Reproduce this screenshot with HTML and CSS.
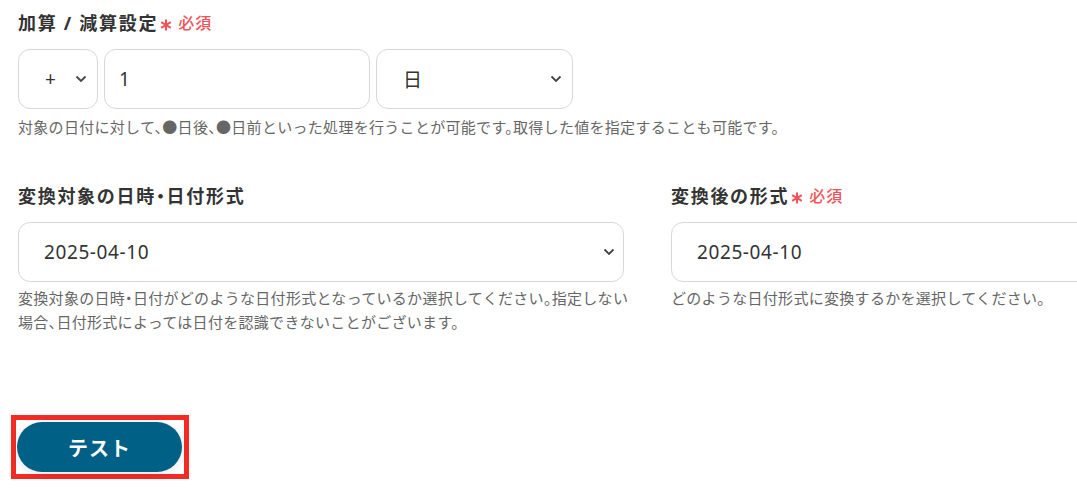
FILE: index.html
```html
<!DOCTYPE html>
<html lang="ja">
<head>
  <meta charset="UTF-8">
  <meta name="viewport" content="width=device-width, initial-scale=1.0">
  <title>日付の加算・減算</title>
  <link rel="stylesheet" href="styles.css">
</head>
<body>
  <div class="page">
    <!-- 加算 / 減算 -->
    <div class="field">
      <div class="label">加算 / 減算設定<span class="required"><svg class="star" viewBox="0 0 12 12"><path d="M6 0.5v11M1.2 3.2l9.6 5.6M10.8 3.2 1.2 8.8"/></svg>必須</span></div>
      <div class="calc-row">
        <div class="box select sign">
          <span>+</span>
          <svg class="chev" viewBox="0 0 12 8"><path d="M1.5 1.5 6 6l4.5-4.5"/></svg>
        </div>
        <div class="box amount"><span>1</span></div>
        <div class="box select unit">
          <span>日</span>
          <svg class="chev" viewBox="0 0 12 8"><path d="M1.5 1.5 6 6l4.5-4.5"/></svg>
        </div>
      </div>
      <p class="help">対象の日付に対して、●日後、●日前といった処理を行うことが可能です。取得した値を指定することも可能です。</p>
    </div>

    <!-- 日付形式 -->
    <div class="format-grid">
      <div class="field">
        <div class="label">変換対象の日時・日付形式</div>
        <div class="box select wide">
          <span>2025-04-10</span>
          <svg class="chev" viewBox="0 0 12 8"><path d="M1.5 1.5 6 6l4.5-4.5"/></svg>
        </div>
        <p class="help">変換対象の日時・日付がどのような日付形式となっているか選択してください。指定しない場合、日付形式によっては日付を認識できないことがございます。</p>
      </div>
      <div class="field">
        <div class="label">変換後の形式<span class="required"><svg class="star" viewBox="0 0 12 12"><path d="M6 0.5v11M1.2 3.2l9.6 5.6M10.8 3.2 1.2 8.8"/></svg>必須</span></div>
        <div class="box select wide">
          <span>2025-04-10</span>
          <svg class="chev" viewBox="0 0 12 8"><path d="M1.5 1.5 6 6l4.5-4.5"/></svg>
        </div>
        <p class="help">どのような日付形式に変換するかを選択してください。</p>
      </div>
    </div>

    <div class="actions">
      <div class="highlight">
        <button type="button" class="test-btn">テスト</button>
      </div>
    </div>
  </div>
</body>
</html>
```

FILE: styles.css
```css
body {
  margin: 0;
  background-color: #fff;
  color: #333;
  font-family: 'Noto Sans', 'Noto Sans CJK JP', sans-serif;
  overflow: hidden;
}

.page {
  padding: 11px 0 0 18px;
  width: 1300px;
}

.label {
  font-size: 18px;
  font-weight: 700;
  line-height: 24px;
  letter-spacing: 1.7px;
  font-feature-settings: "halt";
  color: #333;
  display: flex;
  align-items: center;
}

.required {
  display: inline-flex;
  align-items: center;
  margin-left: 2px;
  color: #f0525a;
  font-size: 16px;
  font-weight: 500;
  letter-spacing: 1px;
}

.required .star {
  width: 12px;
  height: 12px;
  margin: 4px 6px 0 0;
  fill: none;
  stroke: #f0525a;
  stroke-width: 2;
}

.calc-row {
  display: flex;
  gap: 6px;
  margin-top: 14px;
}

.box {
  box-sizing: border-box;
  height: 60px;
  border: 1px solid #d5d8df;
  border-radius: 12px;
  background-color: #fff;
  display: flex;
  align-items: center;
  font-size: 19px;
  letter-spacing: 0.6px;
  color: #333;
}

.select {
  justify-content: space-between;
}

.chev {
  width: 12px;
  height: 8px;
  flex-shrink: 0;
  fill: none;
  stroke: #444;
  stroke-width: 1.8;
}

.sign {
  width: 80px;
  padding: 0 10px 0 26px;
}

.amount {
  width: 266px;
  padding-left: 14px;
}

.unit {
  width: 197px;
  padding: 0 10px 0 26px;
}

.help {
  margin: 6px 0 0;
  font-size: 15px;
  line-height: 24px;
  letter-spacing: 0.3px;
  font-feature-settings: "halt";
  color: #666;
}

.format-grid {
  display: grid;
  grid-template-columns: 606px 606px;
  column-gap: 47px;
  margin-top: 45px;
}

.format-grid .box {
  margin-top: 14px;
}

.wide {
  padding: 0 8px 0 25px;
}

.format-grid .help {
  margin: 4px -8px 0 0;
}

.actions {
  margin-top: 81px;
}

.highlight {
  display: inline-block;
  margin-left: -7px;
  padding: 2px 2px 2px 1px;
  border: 5px solid #f32b24;
}

.test-btn {
  width: 165px;
  height: 50px;
  border: none;
  border-radius: 25px;
  background-color: #006085;
  color: #fff;
  font-family: 'Noto Sans CJK JP', sans-serif;
  font-size: 20px;
  font-weight: 700;
  letter-spacing: 1px;
  display: block;
  box-shadow: 0 2px 10px rgba(0, 40, 80, 0.12);
  cursor: pointer;
}
```
